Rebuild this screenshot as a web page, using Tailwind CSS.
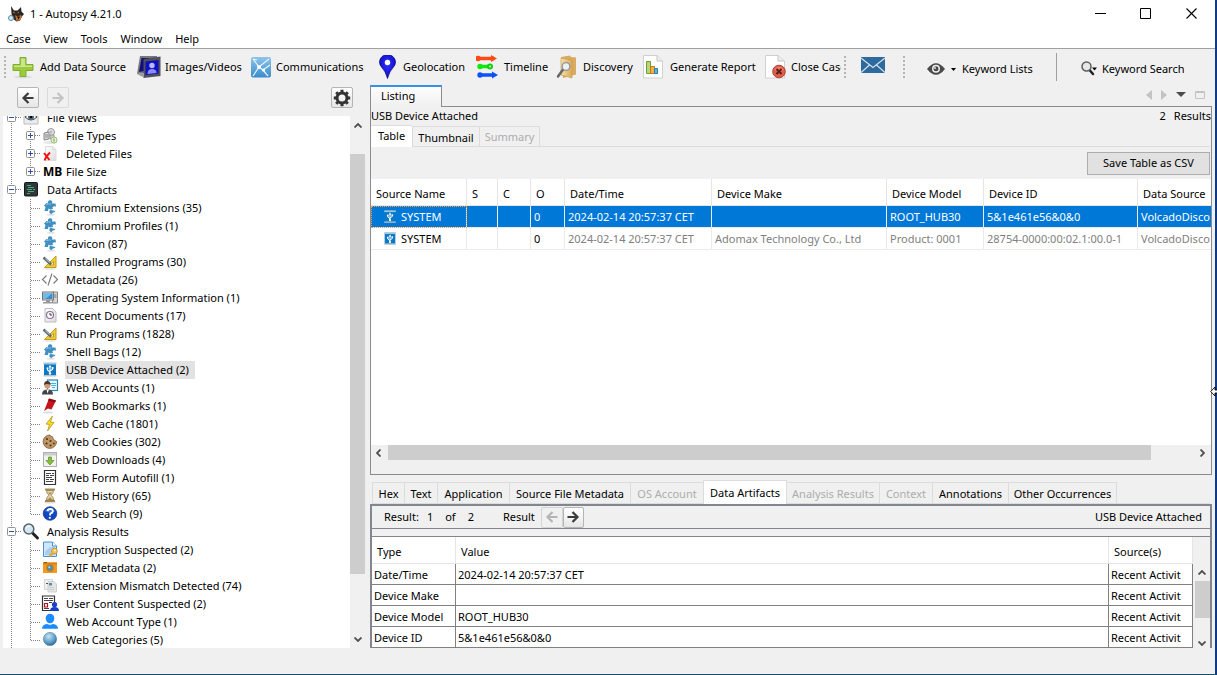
<!DOCTYPE html>
<html lang="en">
<head>
    <meta charset="UTF-8">
    <meta name="viewport" content="width=device-width, initial-scale=1.0">
    <title>1 - Autopsy 4.21.0</title>
    <script src="https://cdn.jsdelivr.net/npm/@tailwindcss/browser@4"></script>
</head>
<body class="h-screen overflow-hidden bg-[#f0f0f0] font-['Noto_Sans','Segoe_UI',sans-serif] text-[11px] leading-4 text-black">

    <!-- Icon library -->
    <svg class="absolute h-0 w-0" aria-hidden="true">
        <defs>
            <linearGradient id="blueGrad" x1="0" y1="0" x2="0" y2="1"><stop offset="0" stop-color="#8fc4ea"/><stop offset="1" stop-color="#3a8ccc"/></linearGradient>
            <linearGradient id="pageGrad" x1="0" y1="0" x2="1" y2="1"><stop offset="0" stop-color="#fff"/><stop offset="1" stop-color="#dcdcdc"/></linearGradient>
            <linearGradient id="folderGrad" x1="0" y1="0" x2="1" y2="0"><stop offset="0" stop-color="#f6dfa8"/><stop offset="1" stop-color="#d9a95a"/></linearGradient>
            <radialGradient id="globeGrad" cx=".4" cy=".3" r=".8"><stop offset="0" stop-color="#c5e2f2"/><stop offset=".6" stop-color="#5c9cc8"/><stop offset="1" stop-color="#1f5482"/></radialGradient>
            <radialGradient id="pinGrad" cx=".5" cy=".4" r=".7"><stop offset="0" stop-color="#3434ff"/><stop offset="1" stop-color="#0000b8"/></radialGradient>
        </defs>
        <symbol id="views" viewBox="0 0 18 18"><path d="M2 1h14v14H2z" fill="#ececec" stroke="#bbb"/><path d="M3 8q6-6 12 0-6 6-12 0z" fill="#fff" stroke="#444"/><circle cx="9" cy="8" r="3" fill="#4b6b80"/><circle cx="9" cy="8" r="1.200" fill="#000"/></symbol>
        <symbol id="types" viewBox="0 0 18 18"><ellipse cx="9" cy="15.500" rx="7" ry="1.500" fill="#e6e6e6"/><circle cx="10" cy="5" r="3.500" fill="#e4e4e4" stroke="#999"/><circle cx="10" cy="5" r="1" fill="#fff" stroke="#aaa"/><path d="M3 6l5-1v7l-5 1z" fill="#ddd" stroke="#888"/><path d="M4 8h3M4 10h3" stroke="#888"/><path d="M9 8h4v4H9z" fill="#ccc" stroke="#999"/><circle cx="13" cy="13" r="3" fill="#e5f2d5" stroke="#9cba7a"/><path d="M13 11.500v3" stroke="#6c9a3c"/></symbol>
        <symbol id="deleted" viewBox="0 0 18 18"><path d="M4.500 1.500h7l3.500 3v11H4.500z" fill="url(#pageGrad)" stroke="#ddd"/><path d="M11.500 1.500v3H15" fill="none" stroke="#ddd"/><path d="M3 8l5.500 7M9 7.500Q5 11 3.500 15.500" stroke="#ee1111" stroke-width="2" fill="none"/></symbol>
        <symbol id="data" viewBox="0 0 18 18"><rect x="2.500" y="1.500" width="13" height="13.500" rx="1" fill="#30363a" stroke="#15181a"/><path d="M5 4.500h4M6 6.500h6M5 8.500h5M11 8.500h2M6 10.500h6M5 12.500h3" stroke="#4aa57c"/></symbol>
        <symbol id="puzzle" viewBox="0 0 18 18"><ellipse cx="10" cy="15.800" rx="4" ry="1" fill="#e4e4e4"/><path d="M3 6.500L5.500 4l1.500.5q-.3-3.500 2.300-3.200T11 4.500l3.500 0 .5 3-2-.2-1.500 1L12 10l-3 .5-1.500-1-.5 2.500H3.500L4.500 8z" fill="#3f8fc0"/><path d="M8.500 11.500q1.500-1.500 2.500-.3l3.500.8-1.500 1.500-1-.3-1.500 2-2-1.200z" fill="#3f8fc0"/><path d="M5 6q2-1.500 5-1" stroke="#86bfe0" fill="none"/></symbol>
        <symbol id="ruler" viewBox="0 0 18 18"><ellipse cx="9" cy="15.800" rx="6" ry="1" fill="#e6e6e6"/><path d="M15 3v11.500H3.500z" fill="#f0cd38" stroke="#c79c18"/><path d="M12.500 8.500v3.500h-4z" fill="#fff" stroke="#c79c18"/><path d="M2.500 4.500l7.500 7" stroke="#5e6c76" stroke-width="2.600"/><path d="M4 5.500l4.500 4" stroke="#b3bfc6"/></symbol>
        <symbol id="code" viewBox="0 0 18 18"><path d="M5.500 4.500L1.500 8.500l4 4M12.500 4.500l4 4-4 4M11 2.500L7 14.500" fill="none" stroke="#777" stroke-width="1.100"/></symbol>
        <symbol id="computer" viewBox="0 0 18 18"><path d="M11.500 3h5v11h-5z" fill="#d6d6d6" stroke="#888"/><path d="M13 6h2.500M13 8h2.500" stroke="#777"/><rect x="1.500" y="3" width="11" height="8" fill="#dedede" stroke="#777"/><rect x="2.500" y="4" width="9" height="6" fill="#3c8ccc"/><path d="M2.500 4h9l-7 6h-2z" fill="#74b8e8"/><path d="M5 11h4v2H5zM2 13h9v1.500H2z" fill="#999"/></symbol>
        <symbol id="recent" viewBox="0 0 18 18"><path d="M4 1.500h7.500L15 5v10H4z" fill="url(#pageGrad)" stroke="#bcbcbc"/><circle cx="9" cy="8" r="3.500" fill="#fff" stroke="#8b6e92" stroke-width="1.200"/><path d="M9 6v2h2" fill="none" stroke="#402848"/></symbol>
        <symbol id="usb" viewBox="0 0 18 18"><path d="M3 2h12v12.500H3z" fill="#0c78c6"/><path d="M2.500 1.500h13V3.500h-13z" fill="#9fc6dd"/><path d="M2.500 14h13v1.500h-13z" fill="#b8c3ca"/><path d="M9 13V5.500M6.500 7.500V9L9 11M11.500 7v1.500L9 10" fill="none" stroke="#fff" stroke-width="1.100"/><path d="M9 4l1.500 2.200h-3z" fill="#fff"/><circle cx="6.500" cy="7.300" r="1" fill="#fff"/><circle cx="9" cy="12.500" r="1.200" fill="#fff"/><path d="M10.700 6h1.800v1.800h-1.800z" fill="#fff"/></symbol>
        <symbol id="accounts" viewBox="0 0 18 18"><rect x="6.500" y="1" width="10" height="10.500" fill="#eef9ff" stroke="#2a84b4" stroke-width="1.200"/><path d="M9 4.500h6M10 6.500h5M11 8.500h3" stroke="#43b4e6"/><path d="M1 15.500q0-5 5.500-5t5.500 5z" fill="#454545"/><path d="M5.500 10.500l1 4 1.500-4z" fill="#fff"/><circle cx="6.300" cy="6.500" r="3" fill="#cf9c70"/><path d="M3 6q0-4 3.300-4T9.500 6q-3-2-6.500 0z" fill="#513525"/></symbol>
        <symbol id="bookmark" viewBox="0 0 18 18"><ellipse cx="7" cy="15.500" rx="5" ry="1" fill="#ddd"/><path d="M8 1.500l7 2-4.500 9L7 11.500 3 14z" fill="#c4151c"/><path d="M8 1.500l7 2-1 2-7-2z" fill="#8e0b12"/></symbol>
        <symbol id="bolt" viewBox="0 0 18 18"><path d="M11.500 1L5 9l3.500.5L6.500 16l6.500-8.500-3.500-.5z" fill="#ffd91a" stroke="#a58f20" stroke-width=".7"/></symbol>
        <symbol id="cookie" viewBox="0 0 18 18"><path d="M15.500 8.500A6.700 6.700 0 1 1 9 2q.5 2 2.500 1.800Q11.500 7 15.500 8.500z" fill="#c09868" stroke="#7a5730" stroke-width=".8"/><g fill="#513418"><circle cx="6" cy="6" r="1.100"/><circle cx="9.500" cy="8" r="1.100"/><circle cx="5.500" cy="10.500" r="1.100"/><circle cx="9.500" cy="12.500" r="1.100"/><circle cx="12.800" cy="10.500" r=".9"/></g></symbol>
        <symbol id="download" viewBox="0 0 18 18"><rect x="2.500" y="1.500" width="13" height="14" fill="#f1f1f1" stroke="#b0b0b0"/><path d="M3 2h12v2.500H3z" fill="#cdcdcd"/><path d="M7.500 6h3v3.500H13L9 14 5 9.500h2.500z" fill="#84be3c" stroke="#5c9422" stroke-width=".7"/></symbol>
        <symbol id="form" viewBox="0 0 18 18"><path d="M3.500 1.500h11v14h-11z" fill="#fff" stroke="#333" stroke-width="1.200"/><path d="M5 4.500h5M11 4.500h2M5 6.500h3M9 6.500h4M5 8.500h6M5 10.500h3M9 10.500h4M5 12.500h7" stroke="#444"/></symbol>
        <symbol id="hourglass" viewBox="0 0 18 18"><ellipse cx="9" cy="15.500" rx="6" ry="1" fill="#ddd"/><path d="M4 1.500h10v2H4zM4 13h10v2H4z" fill="#a48a55"/><path d="M5.500 3.500h7Q12.500 7 10 8.200q2.500 1.500 2.500 4.800h-7q0-3.300 2.500-4.800Q5.500 7 5.500 3.500z" fill="#e4d5ab" stroke="#8d7548" stroke-width=".8"/><path d="M7 5.500h4L9 8zM9 10l2.500 3h-5z" fill="#a98b4d"/></symbol>
        <symbol id="question" viewBox="0 0 18 18"><circle cx="9" cy="8.500" r="6.800" fill="#1247c2" stroke="#0a2f86" stroke-width=".7"/><path d="M3.500 6q5.500-6 11 0-5 3-11 0z" fill="#5d8ff0" opacity=".6"/><path d="M6.500 6Q7 3.800 9.500 4t2.300 2.500Q11.500 8 9.300 8.700L9 10.500" fill="none" stroke="#fff" stroke-width="1.800"/><circle cx="8.800" cy="12.800" r="1.100" fill="#fff"/></symbol>
        <symbol id="magnifier" viewBox="0 0 18 18"><path d="M10.500 10l5 5" stroke="#222" stroke-width="3" stroke-linecap="round"/><circle cx="6.800" cy="6" r="5" fill="#d5e6f3" stroke="#57636c" stroke-width="1.500"/><path d="M4 5.500Q5 3 8 3" stroke="#fff" fill="none"/></symbol>
        <symbol id="encrypt" viewBox="0 0 18 18"><path d="M2.500 1h9L15.500 5v10.500h-13z" fill="#cfe6fa" stroke="#4d90cc"/><path d="M4 11q4-6 10-5v8H4z" fill="#a5cdf0"/><path d="M11.500 1V5h4" fill="#fff" stroke="#4d90cc"/><circle cx="13.500" cy="10" r="2.800" fill="#f1c565" stroke="#cf9a34"/><path d="M12 12l-3.500 3" stroke="#e2aa3c" stroke-width="2.400"/><circle cx="14" cy="9.500" r=".8" fill="#fff"/></symbol>
        <symbol id="camera" viewBox="0 0 18 18"><path d="M2 3.500h14V14H2z" fill="#f29a1c"/><path d="M2 3.500h14v2H2z" fill="#dc820c"/><path d="M3 3h3v1H3z" fill="#8f5606"/><circle cx="9" cy="9" r="3.700" fill="#c07c1c"/><circle cx="9" cy="9" r="2.700" fill="#4d8fb8"/><circle cx="8.300" cy="8.200" r="1" fill="#bfe0f0"/></symbol>
        <symbol id="mismatch" viewBox="0 0 18 18"><path d="M3.500 2.500h8v10h-8z" fill="#f2f2f2" stroke="#d2d2d2"/><path d="M7 4.500h6l2.500 2.500v8H7z" fill="#e5e5e5" stroke="#cfcfcf"/><path d="M5 6.500h2" stroke="#555"/><path d="M8 6h3v2.500H8z" fill="#5a8aad"/><path d="M8 10.500h5M8 12.500h5" stroke="#ccc"/></symbol>
        <symbol id="usercontent" viewBox="0 0 18 18"><path d="M1.500 1h12v14.500h-12z" fill="#fff" stroke="#333" stroke-width="1.200"/><path d="M3 3.500h4M8 3.500h4M3 5.500h9M8 7.500h3" stroke="#444"/><path d="M3.500 8.500h3v3.500h-3z" fill="#fff" stroke="#b0101a" stroke-width="1.200"/><path d="M3 13.500h5" stroke="#444"/><circle cx="13.500" cy="9.500" r="2.600" fill="#1a3fc4"/><path d="M9 16q0-4 4.500-4t4.500 4z" fill="#1a3fc4"/></symbol>
        <symbol id="person" viewBox="0 0 18 18"><ellipse cx="9" cy="5.500" rx="4.300" ry="4.800" fill="#1a8cff"/><path d="M1 15.800q0-4 5-4.800l3 1 3-1q5 .8 5 4.800z" fill="#1a8cff"/></symbol>
        <symbol id="globe" viewBox="0 0 18 18"><circle cx="9" cy="8" r="6.600" fill="url(#globeGrad)" stroke="#497ba0" stroke-width=".6"/></symbol>

        <symbol id="arrowLeft" viewBox="0 0 14 14"><path d="M12.500 7H3M7.500 2L2.500 7l5 5" fill="none" stroke="currentColor" stroke-width="2.200"/></symbol>
        <symbol id="arrowRight" viewBox="0 0 14 14"><path d="M1.500 7H11M6.500 2l5 5-5 5" fill="none" stroke="currentColor" stroke-width="2.200"/></symbol>
        <symbol id="grip" viewBox="0 0 2 22"><path d="M1 0v22" stroke="#b4b4b4" stroke-width="2" stroke-dasharray="2 2"/></symbol>

        <!-- tree connectors -->
        <symbol id="g-line" viewBox="0 0 19 18"><path d="M8.500 0v18" stroke="#808080" stroke-dasharray="1 1"/></symbol>
        <symbol id="g-leaf" viewBox="0 0 19 18"><path d="M8.500 0v18M9 9.500h9" stroke="#808080" stroke-dasharray="1 1"/></symbol>
        <symbol id="g-last" viewBox="0 0 19 18"><path d="M8.500 0v10M9 9.500h9" stroke="#808080" stroke-dasharray="1 1"/></symbol>
        <symbol id="g-plus" viewBox="0 0 19 18"><path d="M8.500 0v18M13 8.500h5" stroke="#808080" stroke-dasharray="1 1"/><rect x="4.500" y="4.500" width="8" height="8" rx="1" fill="#fff" stroke="#919191"/><path d="M6 8.500h5M8.500 6v5" stroke="#2b4fa8"/></symbol>
        <symbol id="g-pluslast" viewBox="0 0 19 18"><path d="M8.500 0v9M13 8.500h5" stroke="#808080" stroke-dasharray="1 1"/><rect x="4.500" y="4.500" width="8" height="8" rx="1" fill="#fff" stroke="#919191"/><path d="M6 8.500h5M8.500 6v5" stroke="#2b4fa8"/></symbol>
        <symbol id="g-minus" viewBox="0 0 19 18"><path d="M8.500 0v18M13 8.500h5" stroke="#808080" stroke-dasharray="1 1"/><rect x="4.500" y="4.500" width="8" height="8" rx="1" fill="#fff" stroke="#919191"/><path d="M6 8.500h5" stroke="#2b4fa8"/></symbol>
    </svg>

    <div class="flex h-full flex-col border-r-2 border-b border-r-[#0f3a85] border-b-[#1b5070]">

        <!-- Title bar -->
        <header class="bg-white border-b border-[#a0a0a0]">
            <div class="flex h-7 items-center pl-2">
                <svg class="h-4 w-4 shrink-0" viewBox="0 0 16 16">
                    <path d="M3 0l3 4.500h3.500L13 1l.5 4.500L16 8l-2 2.500-2 4-3.500 1L4 12l-.5-5z" fill="#2b2523"/>
                    <path d="M7 9l2.500 1.500L13 9l1 2-2 3-3.500 1z" fill="#c07434"/>
                    <path d="M9 10.500h3l-1.500 3z" fill="#111"/>
                    <path d="M5 6l2 1M11 6l-1.500 1" stroke="#c07434"/>
                    <circle cx="3" cy="12" r="2.500" fill="#c8ecf8" stroke="#5c8aa0"/>
                </svg>
                <h1 class="ml-1.5 flex-1">1 - Autopsy 4.21.0</h1>
                <div class="flex h-full items-stretch pr-px pb-0.5">
                    <button class="flex w-[45px] items-center justify-center" aria-label="Minimize"><svg class="h-[11px] w-[11px]" viewBox="0 0 11 11"><path d="M0 5.500h11" stroke="#000"/></svg></button>
                    <button class="flex w-[45px] items-center justify-center" aria-label="Maximize"><svg class="h-[11px] w-[11px]" viewBox="0 0 11 11"><path d="M.5.5h10v10H.5z" fill="none" stroke="#000"/></svg></button>
                    <button class="flex w-[46px] items-center justify-center" aria-label="Close"><svg class="h-[11px] w-[11px]" viewBox="0 0 11 11"><path d="M.5.5l10 10M10.500.5l-10 10" stroke="#000" stroke-width="1.100"/></svg></button>
                </div>
            </div>
            <nav class="flex h-5 items-center gap-[13px] pl-1.5 pt-0.5">
                <button>Case</button>
                <button>View</button>
                <button>Tools</button>
                <button>Window</button>
                <button>Help</button>
            </nav>
        </header>

        <!-- Toolbar -->
        <div class="flex h-9 shrink-0 items-center whitespace-nowrap">
            <svg class="ml-1 h-[22px] w-0.5 shrink-0"><use href="#grip"/></svg>
            <div class="ml-1.5 flex w-[829px] shrink-0 overflow-hidden">
                <button class="flex w-[125px] shrink-0 items-center gap-1">
                    <svg class="h-6 w-6 shrink-0" viewBox="0 0 24 24"><ellipse cx="11" cy="22" rx="9" ry="1.500" fill="#dcdcdc"/><path d="M8 2.500h6v7h7v6h-7v6H8v-6H1v-6h7z" fill="#9bcb3c" stroke="#7fae2c"/><path d="M9 3.500h4v7h7v1.500H2v-1.500h7z" fill="#c9e68a"/></svg>
                    Add Data Source
                </button>
                <button class="flex w-[111px] shrink-0 items-center gap-1">
                    <svg class="h-6 w-6 shrink-0" viewBox="0 0 24 24"><path d="M3 1l17 0v15L0 19z" fill="#77777d"/><path d="M4.500 3h13v11L2 17z" fill="#10107c"/><path d="M6.500 4l17-2.500V21l-17 2z" fill="#505058"/><path d="M8.500 6.500L21.500 5v13.500l-13 1.500z" fill="#1010c0"/><circle cx="15" cy="10.500" r="2.700" fill="#b9b9ff"/><path d="M10.500 19q0-5 4.500-5t4.500 4z" fill="#8c8cf4"/><path d="M0 19l6-1v4z" fill="#999"/></svg>
                    Images/Videos
                </button>
                <button class="flex w-[127px] shrink-0 items-center gap-1">
                    <svg class="h-6 w-6 shrink-0" viewBox="0 0 24 24"><rect x="3" y="2" width="20" height="20.500" rx="2" fill="url(#blueGrad)"/><path d="M5 4l6 8 10-8M11 12l-6 9M11 12l4 3 5 6M15 15l7-5M5 4l4 1" fill="none" stroke="#e8f5ff" stroke-width="1.200"/><circle cx="11" cy="12" r="2" fill="#fff"/><circle cx="15.500" cy="15" r="1.600" fill="#fff"/></svg>
                    Communications
                </button>
                <button class="flex w-[101px] shrink-0 items-center gap-1">
                    <svg class="h-6 w-6 shrink-0" viewBox="0 0 24 24"><path d="M12.500 23.500Q10.500 16 6.500 12A8 7.500 0 1 1 18.500 12Q14.500 16 12.500 23.500z" fill="url(#pinGrad)" stroke="#000080" stroke-width=".7"/><circle cx="12.500" cy="7.500" r="2.700" fill="#fff"/></svg>
                    Geolocation
                </button>
                <button class="flex w-[79px] shrink-0 items-center gap-1">
                    <svg class="h-6 w-6 shrink-0" viewBox="0 0 24 24"><path d="M1 3.500h17" stroke="#ff4a10" stroke-width="3.500"/><path d="M15 0l6 3.500L15 7z" fill="#ff4a10"/><circle cx="2" cy="3.500" r="2.700" fill="#ff4a10"/><path d="M4 11.500h11" stroke="#10e810" stroke-width="3.500"/><circle cx="4" cy="11.500" r="2.700" fill="#10e810"/><circle cx="14" cy="11.500" r="2" fill="#d8ffd8" stroke="#10d010" stroke-width="2"/><path d="M4 20h14" stroke="#0b52ff" stroke-width="3.500"/><path d="M16 16.500l6 3.500-6 3.500z" fill="#0b52ff"/><circle cx="4" cy="20" r="2.700" fill="#0b52ff"/></svg>
                    Timeline
                </button>
                <button class="flex w-[87px] shrink-0 items-center gap-1">
                    <svg class="h-6 w-6 shrink-0" viewBox="0 0 24 24"><path d="M6 2l9-1.500 1 1.500 5 .5v17L8 23z" fill="#d9ab62"/><path d="M6 3l11 2v18L6 20z" fill="url(#folderGrad)" stroke="#c59848" stroke-width=".6"/><path d="M8 14.500l-5 7" stroke="#666" stroke-width="2.500" stroke-linecap="round"/><circle cx="11" cy="11.500" r="3.800" fill="#eef1f3" stroke="#909498" stroke-width="1.300"/></svg>
                    Discovery
                </button>
                <button class="flex w-[121px] shrink-0 items-center gap-1">
                    <svg class="h-6 w-6 shrink-0" viewBox="0 0 24 24"><path d="M1.500.5H15L20.500 6v17h-19z" fill="#fff" stroke="#d0d0d0"/><path d="M15 .5V6h5.500" fill="#eee" stroke="#c4c4c4"/><path d="M4.500 6.500h4v12h-4z" fill="#b8d878" stroke="#6c9c34"/><path d="M8.500 11.500h4v7h-4z" fill="#f2b04c" stroke="#bf7a18"/><path d="M12.500 13.500h3v5h-3z" fill="#5ab4dc" stroke="#2c80ac"/></svg>
                    Generate Report
                </button>
                <button class="flex shrink-0 items-center gap-1">
                    <svg class="h-6 w-6 shrink-0" viewBox="0 0 24 24"><path d="M2.500.5H15L21.500 6v17h-19z" fill="#fff" stroke="#d0d0d0"/><path d="M15 .5V6h6" fill="#eee" stroke="#c4c4c4"/><circle cx="16" cy="16.500" r="6.300" fill="#dc5e4c" stroke="#b34234"/><path d="M11 15q5-7 10 0-5 2-10 0z" fill="#ee9585" opacity=".6"/><path d="M13.500 14l5 5M18.500 14l-5 5" stroke="#641c14" stroke-width="2"/></svg>
                    Close Case
                </button>
            </div>
            <svg class="ml-[3px] h-[22px] w-0.5 shrink-0"><use href="#grip"/></svg>
            <button class="ml-[15px] shrink-0 pb-1" aria-label="Messages">
                <svg class="h-4 w-6" viewBox="0 0 24 16"><path d="M0 0h24v16H0z" fill="#2f6a9f"/><path d="M0 1l12 9.500L24 1M0 15.500l8.500-7.500M24 15.500L15.500 8" fill="none" stroke="#d5e4f0" stroke-width="1.200"/></svg>
            </button>
            <svg class="ml-[18px] h-[22px] w-0.5 shrink-0"><use href="#grip"/></svg>
            <button class="ml-[22px] flex w-[129px] shrink-0 items-center pt-1">
                <svg class="h-3 w-[18px]" viewBox="0 0 18 12"><path d="M0 6q9-11.500 18 0-9 11.500-18 0z" fill="#4a4a4a"/><circle cx="9" cy="5.800" r="4" fill="#f0f0f0"/><circle cx="9" cy="5.800" r="2.500" fill="#4a4a4a"/><circle cx="8" cy="5" r=".9" fill="#f0f0f0"/></svg>
                <svg class="ml-1.5 mr-1.5 h-[3px] w-[5px]" viewBox="0 0 5 3"><path d="M0 0h5L2.500 3z"/></svg>
                Keyword Lists
            </button>
            <span class="h-7 w-px shrink-0 bg-[#a0a0a0]"></span>
            <button class="ml-6 flex shrink-0 items-center pt-1">
                <svg class="mr-[5px] h-4 w-4" viewBox="0 0 16 16"><path d="M8.500 9l3.500 4" stroke="#222" stroke-width="2.500" stroke-linecap="round"/><circle cx="5.500" cy="5.500" r="4.500" fill="#e4e8ea" stroke="#5c5c5c" stroke-width="1.500"/><path d="M11 6.500h5L13.500 9.500z"/></svg>
                Keyword Search
            </button>
        </div>

        <div class="flex min-h-0 flex-1">

            <!-- Data source tree -->
            <aside class="ml-[3px] mr-[5px] flex w-[362px] shrink-0 flex-col">
                <div class="flex h-[31px] shrink-0 items-start pl-3.5 pr-3 pt-0.5">
                    <button class="flex h-[21px] w-[22px] items-center justify-center rounded-xs border border-[#b5b5b5] bg-linear-to-b from-white to-[#e6e6e6] text-[#3c3c3c]" aria-label="Back"><svg class="h-3.5 w-3.5"><use href="#arrowLeft"/></svg></button>
                    <button class="ml-2 flex h-[21px] w-[22px] items-center justify-center rounded-xs border border-[#dadada] text-[#c4c4c4]" aria-label="Forward" disabled><svg class="h-3.5 w-3.5"><use href="#arrowRight"/></svg></button>
                    <button class="ml-auto flex h-[21px] w-[22px] items-center justify-center rounded-xs border border-[#b5b5b5] bg-linear-to-b from-white to-[#e6e6e6]" aria-label="Options">
                        <svg class="h-[18px] w-[18px]" viewBox="0 0 18 18"><circle cx="9" cy="9" r="5" fill="none" stroke="#333" stroke-width="3"/><path d="M9 .8v3M9 14.200v3M.8 9h3M14.200 9h3M3.200 3.200l2 2M12.800 12.800l2 2M3.200 14.800l2-2M12.800 5.200l2-2" stroke="#333" stroke-width="3"/></svg>
                    </button>
                </div>
                <div class="flex min-h-0 flex-1">
                    <div class="min-w-0 flex-1 overflow-hidden bg-white">
                        <ul id="tree" role="tree" class="-mt-[7px]"></ul>
                    </div>
                    <div class="flex w-[15px] flex-col items-center">
                        <svg class="my-[7px] h-[5px] w-2 shrink-0" viewBox="0 0 8 5"><path d="M.5 4.500L4 1l3.500 3.500" fill="none" stroke="#505050" stroke-width="1.800"/></svg>
                        <span class="mt-[19px] h-[420px] w-full bg-[#cdcdcd]"></span>
                        <svg class="mb-1.5 mt-auto h-[5px] w-2 shrink-0" viewBox="0 0 8 5"><path d="M.5.5L4 4 7.500.5" fill="none" stroke="#505050" stroke-width="1.800"/></svg>
                    </div>
                </div>
            </aside>

            <main class="mr-[3px] flex min-w-0 flex-1 flex-col">

                <!-- Listing -->
                <div class="flex h-[22px] shrink-0">
                    <button class="w-[72px] border-x border-t-2 border-x-[#8a8d8f] border-t-[#3392e8] bg-linear-to-b from-[#fdfdfd] to-[#f0f0f0] pb-0.5 pl-2.5 text-left">Listing</button>
                    <div class="flex flex-1 items-center justify-end gap-[9px] border-b border-[#8a8d8f] pb-0.5 pr-[7px]">
                        <svg class="h-2.5 w-1.5" viewBox="0 0 6 10"><path d="M6 0v10L0 5z" fill="#c3c3c3"/></svg>
                        <svg class="h-2.5 w-1.5" viewBox="0 0 6 10"><path d="M0 0v10l6-5z" fill="#c3c3c3"/></svg>
                        <svg class="h-[5px] w-2.5" viewBox="0 0 10 5"><path d="M0 0h10L5 5z" fill="#4a4a4a"/></svg>
                        <svg class="h-2 w-2.5" viewBox="0 0 10 8"><path d="M.5.5h9v7h-9zM.5 1.500h9" fill="none" stroke="#c3c3c3"/></svg>
                    </div>
                </div>
                <section class="flex min-h-0 flex-1 flex-col border-x border-b border-[#8a8d8f]">
                    <div class="flex h-[18px] shrink-0 items-center justify-between">
                        <h2>USB Device Attached</h2>
                        <p><span class="mr-2">2</span>Results</p>
                    </div>
                    <div class="flex h-[22px] shrink-0 items-stretch whitespace-nowrap">
                        <button class="w-[41px] border-t border-[#dcdcdc] bg-white pb-px">Table</button>
                        <div class="mr-px flex flex-1 items-stretch border-b border-[#dcdcdc] pt-px">
                            <button class="w-[68px] border-x border-t border-[#dcdcdc] pt-0.5">Thumbnail</button>
                            <button class="w-[60px] border-r border-t border-[#dcdcdc] text-[#adadad]" disabled>Summary</button>
                        </div>
                    </div>
                    <div class="flex h-8 shrink-0 items-center justify-end pr-px">
                        <button class="h-[23px] w-[123px] border border-[#adadad] bg-[#e1e1e1]">Save Table as CSV</button>
                    </div>
                    <div class="min-h-0 flex-1 overflow-hidden bg-white">
                        <table class="w-full table-fixed border-separate border-spacing-0 whitespace-nowrap text-left">
                            <colgroup>
                                <col class="w-[96px]"><col class="w-[31px]"><col class="w-[33px]"><col class="w-[34px]"><col class="w-[147px]"><col class="w-[175px]"><col class="w-[97px]"><col class="w-[154px]"><col>
                            </colgroup>
                            <thead>
                                <tr class="h-[27px] [&>th]:border-r [&>th]:border-b [&>th]:border-[#e5e5e5] [&>th]:pl-[5px] [&>th]:pt-1 [&>th]:font-normal [&>th:last-child]:border-r-0">
                                    <th>Source Name</th><th>S</th><th>C</th><th>O</th><th>Date/Time</th><th>Device Make</th><th>Device Model</th><th>Device ID</th><th>Data Source</th>
                                </tr>
                            </thead>
                            <tbody class="[&_td]:overflow-hidden [&_td]:border-r [&_td]:border-b [&_td]:border-[#ebebeb] [&_td]:py-0 [&_td]:pl-[3px] [&_td:last-child]:border-r-0">
                                <tr class="h-[22px] bg-[#0078d7] text-white">
                                    <td class="outline-1 -outline-offset-1 outline-dotted outline-[#ff9b38]"><span class="flex items-center gap-[3px] pl-2"><svg class="h-4 w-4"><use href="#usb"/></svg>SYSTEM</span></td>
                                    <td></td><td></td><td>0</td><td>2024-02-14 20:57:37 CET</td><td></td><td>ROOT_HUB30</td><td>5&amp;1e461e56&amp;0&amp;0</td><td>VolcadoDisco</td>
                                </tr>
                                <tr class="h-[22px] text-[#808080]">
                                    <td class="text-black"><span class="flex items-center gap-[3px] pl-2"><svg class="h-4 w-4"><use href="#usb"/></svg>SYSTEM</span></td>
                                    <td></td><td></td><td class="text-black">0</td><td>2024-02-14 20:57:37 CET</td><td>Adomax Technology Co., Ltd</td><td>Product: 0001</td><td>28754-0000:00:02.1:00.0-1</td><td>VolcadoDisco</td>
                                </tr>
                            </tbody>
                        </table>
                    </div>
                    <div class="flex h-[15px] shrink-0 items-center">
                        <svg class="ml-[5px] mr-[7px] h-2 w-[5px]" viewBox="0 0 5 8"><path d="M4.500.5L1 4l3.500 3.500" fill="none" stroke="#505050" stroke-width="1.800"/></svg>
                        <span class="h-full flex-1 bg-[#cdcdcd]"></span>
                        <svg class="ml-[49px] mr-1.5 h-2 w-[5px]" viewBox="0 0 5 8"><path d="M.5.5L4 4 .5 7.500" fill="none" stroke="#505050" stroke-width="1.800"/></svg>
                    </div>
                    <div class="h-3.5 shrink-0"></div>
                </section>

                <!-- Content viewers -->
                <div class="mt-[5px] flex h-6 shrink-0 items-stretch whitespace-nowrap pl-0.5">
                    <div class="flex items-stretch border-b border-[#dcdcdc] pt-0.5 [&>button]:border-l [&>button]:border-t [&>button]:border-[#dcdcdc] [&>button]:pt-0.5">
                        <button class="w-8">Hex</button>
                        <button class="w-[33px]">Text</button>
                        <button class="w-[72px]">Application</button>
                        <button class="w-[121px]">Source File Metadata</button>
                        <button class="w-[73px] text-[#adadad]" disabled>OS Account</button>
                    </div>
                    <button class="w-[84px] border-x border-t border-[#dcdcdc] bg-white">Data Artifacts</button>
                    <div class="mr-0.5 flex flex-1 items-stretch border-b border-[#dcdcdc] pt-0.5 [&>button]:border-r [&>button]:border-t [&>button]:border-[#dcdcdc] [&>button]:pt-0.5">
                        <button class="w-[93px] text-[#adadad]" disabled>Analysis Results</button>
                        <button class="w-[53px] text-[#adadad]" disabled>Context</button>
                        <button class="w-[76px]">Annotations</button>
                        <button class="w-[108px]">Other Occurrences</button>
                    </div>
                </div>
                <section class="flex h-36 shrink-0 flex-col border-x-2 border-t-2 border-[#83858f]">
                    <div class="flex h-[23px] shrink-0 items-center border-b border-[#83858f] pl-3 pr-2">
                        <span>Result:</span><span class="ml-2">1</span><span class="ml-3">of</span><span class="ml-3">2</span>
                        <span class="ml-[29px] w-[38px]">Result</span>
                        <button class="flex h-[21px] w-[22px] items-center justify-center rounded-xs border border-[#d4d4d4] text-[#b4b4b4]" aria-label="Previous result" disabled><svg class="h-3.5 w-3.5"><use href="#arrowLeft"/></svg></button>
                        <button class="flex h-[21px] w-[21px] items-center justify-center rounded-xs border border-[#b5b5b5] bg-linear-to-b from-white to-[#e6e6e6] text-[#3c3c3c]" aria-label="Next result"><svg class="h-3.5 w-3.5"><use href="#arrowRight"/></svg></button>
                        <span class="ml-auto">USB Device Attached</span>
                    </div>
                    <div class="mt-[7px] flex min-h-0 flex-1 border-t border-[#83858f]">
                        <div class="min-w-0 flex-1 overflow-hidden">
                            <table class="w-full table-fixed border-separate border-spacing-0 whitespace-nowrap bg-white text-left">
                                <colgroup><col class="w-[84px]"><col><col class="w-[84px]"></colgroup>
                                <thead>
                                    <tr class="h-[27px] [&>th]:border-r [&>th]:border-b [&>th]:border-[#e5e5e5] [&>th]:pl-[5px] [&>th]:pt-1 [&>th]:font-normal">
                                        <th>Type</th><th>Value</th><th>Source(s)</th>
                                    </tr>
                                </thead>
                                <tbody class="[&_td]:border-r [&_td]:border-b [&_td]:border-[#808080] [&_td]:pb-0 [&_td]:pl-0.5 [&_td]:pt-px [&>tr]:h-[21px]">
                                    <tr><td>Date/Time</td><td>2024-02-14 20:57:37 CET</td><td>Recent Activit</td></tr>
                                    <tr><td>Device Make</td><td></td><td>Recent Activit</td></tr>
                                    <tr><td>Device Model</td><td>ROOT_HUB30</td><td>Recent Activit</td></tr>
                                    <tr><td>Device ID</td><td>5&amp;1e461e56&amp;0&amp;0</td><td>Recent Activit</td></tr>
                                </tbody>
                            </table>
                        </div>
                        <div class="ml-px flex w-4 flex-col items-center pt-[27px]">
                            <svg class="my-1.5 h-[5px] w-2 shrink-0" viewBox="0 0 8 5"><path d="M.5 4.500L4 1l3.500 3.500" fill="none" stroke="#505050" stroke-width="1.800"/></svg>
                            <span class="h-[37px] w-[15px] bg-[#cdcdcd]"></span>
                            <svg class="mb-0.5 mt-auto h-[5px] w-2 shrink-0" viewBox="0 0 8 5"><path d="M.5.5L4 4 7.500.5" fill="none" stroke="#505050" stroke-width="1.800"/></svg>
                        </div>
                    </div>
                </section>
            </main>
        </div>

        <!-- Status bar -->
        <footer class="h-[26px] shrink-0"></footer>
    </div>

    <!-- Resize cursor on the window edge -->
    <svg class="absolute right-0 top-[386px] h-[11px] w-[7px]" viewBox="0 0 7 11"><path d="M5 1L.7 5.500 5 10V7h2V4H5z" fill="#fff"/><path d="M7 4H5V1L.7 5.500 5 10V7h2" fill="none" stroke="#000" stroke-width=".9"/></svg>

    <script>
        // level, connector, icon, label
        const nodes = [
            [1, 'minus', 'views', 'File Views'],
            [2, 'plus', 'types', 'File Types'],
            [2, 'plus', 'deleted', 'Deleted Files'],
            [2, 'pluslast', 'mb', 'File Size'],
            [1, 'minus', 'data', 'Data Artifacts'],
            [2, 'leaf', 'puzzle', 'Chromium Extensions (35)'],
            [2, 'leaf', 'puzzle', 'Chromium Profiles (1)'],
            [2, 'leaf', 'puzzle', 'Favicon (87)'],
            [2, 'leaf', 'ruler', 'Installed Programs (30)'],
            [2, 'leaf', 'code', 'Metadata (26)'],
            [2, 'leaf', 'computer', 'Operating System Information (1)'],
            [2, 'leaf', 'recent', 'Recent Documents (17)'],
            [2, 'leaf', 'ruler', 'Run Programs (1828)'],
            [2, 'leaf', 'puzzle', 'Shell Bags (12)'],
            [2, 'leaf', 'usb', 'USB Device Attached (2)', true],
            [2, 'leaf', 'accounts', 'Web Accounts (1)'],
            [2, 'leaf', 'bookmark', 'Web Bookmarks (1)'],
            [2, 'leaf', 'bolt', 'Web Cache (1801)'],
            [2, 'leaf', 'cookie', 'Web Cookies (302)'],
            [2, 'leaf', 'download', 'Web Downloads (4)'],
            [2, 'leaf', 'form', 'Web Form Autofill (1)'],
            [2, 'leaf', 'hourglass', 'Web History (65)'],
            [2, 'last', 'question', 'Web Search (9)'],
            [1, 'minus', 'magnifier', 'Analysis Results'],
            [2, 'leaf', 'encrypt', 'Encryption Suspected (2)'],
            [2, 'leaf', 'camera', 'EXIF Metadata (2)'],
            [2, 'leaf', 'mismatch', 'Extension Mismatch Detected (74)'],
            [2, 'leaf', 'usercontent', 'User Content Suspected (2)'],
            [2, 'leaf', 'person', 'Web Account Type (1)'],
            [2, 'last', 'globe', 'Web Categories (5)']
        ];

        const gutter = id => `<svg class="h-[18px] w-[19px] shrink-0"><use href="#g-${id}"/></svg>`;

        document.getElementById('tree').innerHTML = nodes.map(([level, connector, icon, label, selected]) => `
            <li role="treeitem" aria-level="${level}" class="flex h-[18px] items-center whitespace-nowrap">
                ${level === 2 ? gutter('line') : ''}${gutter(connector)}
                ${icon === 'mb'
                    ? '<b class="w-[18px] shrink-0 pl-0.5 font-[\'Liberation_Sans\',sans-serif] text-xs leading-4">MB</b>'
                    : `<svg class="h-[18px] w-[18px] shrink-0"><use href="#${icon}"/></svg>`}
                <span class="ml-1.5 pl-px leading-[18px] ${selected ? 'bg-[#e2e2e2] pr-1.5' : ''}">${label}</span>
            </li>`).join('');
    </script>
</body>
</html>
